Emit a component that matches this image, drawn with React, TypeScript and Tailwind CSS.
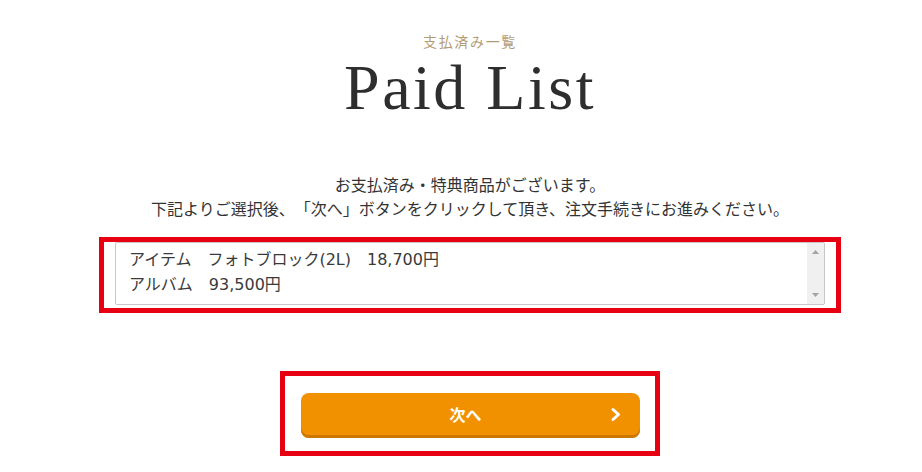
import React from "react";

const jp = { fontFamily: '"Noto Sans CJK JP", "Noto Sans", sans-serif' };

const items = [
  "アイテム　フォトブロック(2L)　18,700円",
  "アルバム　93,500円",
];

const PaidList = () => {
  return (
    <div className="w-[922px] h-[472px] bg-white overflow-hidden">
      <div className="flex flex-col items-center pl-[18px] [text-spacing-trim:space-all]" style={jp}>
        {/* Heading */}
        <p className="mt-[31px] text-[14px] leading-[20px] tracking-[0.12em] text-[#b39c76]">支払済み一覧</p>
        <h1
          className="mt-[5px] text-[64px] leading-[64px] tracking-[2.5px] text-[#2e2e2e]"
          style={{ fontFamily: '"Liberation Serif", "DejaVu Serif", serif' }}
        >
          Paid List
        </h1>

        {/* Intro */}
        <div className="mt-[52px] text-center text-[16px] leading-[24px] text-[#333333]">
          <p>お支払済み・特典商品がございます。</p>
          <p>下記よりご選択後、「次へ」ボタンをクリックして頂き、注文手続きにお進みください。</p>
        </div>

        {/* Item list */}
        <div className="mt-[17px] w-[742px] h-[76px] border-[5px] border-[#e60012] pl-[11px] pr-[11px]">
          <div className="flex h-[63px] border border-[#c8c8c8] rounded-[2px] bg-white">
            <div
              className="flex-1 pl-[13px] pt-[4px] text-[16px] leading-[25px] text-[#3a3a3a]"
              style={{ fontFamily: '"DejaVu Sans", "Noto Sans CJK JP", sans-serif' }}
            >
              {items.map((item) => (
                <p key={item}>{item}</p>
              ))}
            </div>
            <div className="w-[17px] bg-[#f0f0f0] flex flex-col items-center justify-between py-[7px]">
              <svg width="7" height="4" viewBox="0 0 7 4">
                <path d="M0 4 L3.5 0 L7 4 Z" fill="#a3a3a3" />
              </svg>
              <svg width="7" height="4" viewBox="0 0 7 4">
                <path d="M0 0 L3.5 4 L7 0 Z" fill="#a3a3a3" />
              </svg>
            </div>
          </div>
        </div>

        {/* Next button */}
        <div className="mt-[58px] w-[380px] h-[85px] border-[5px] border-[#e60012] pl-[16px] pr-[15px] pt-[17px]">
          <button className="relative w-full h-[45px] rounded-[8px] bg-[#f29100] shadow-[inset_0_-3px_0_#cc7800] flex items-center justify-center pb-[3px]">
            <span className="text-white font-bold text-[16px] -ml-[10px]">次へ</span>
            <svg
              className="absolute right-[18px] top-[14px]"
              width="12"
              height="15"
              viewBox="0 0 12 15"
            >
              <path d="M3 2.5 L8.5 7.5 L3 12.5" fill="none" stroke="#ffffff" strokeWidth="3" strokeLinecap="round" strokeLinejoin="round" />
            </svg>
          </button>
        </div>
      </div>
    </div>
  );
};

export default PaidList;
